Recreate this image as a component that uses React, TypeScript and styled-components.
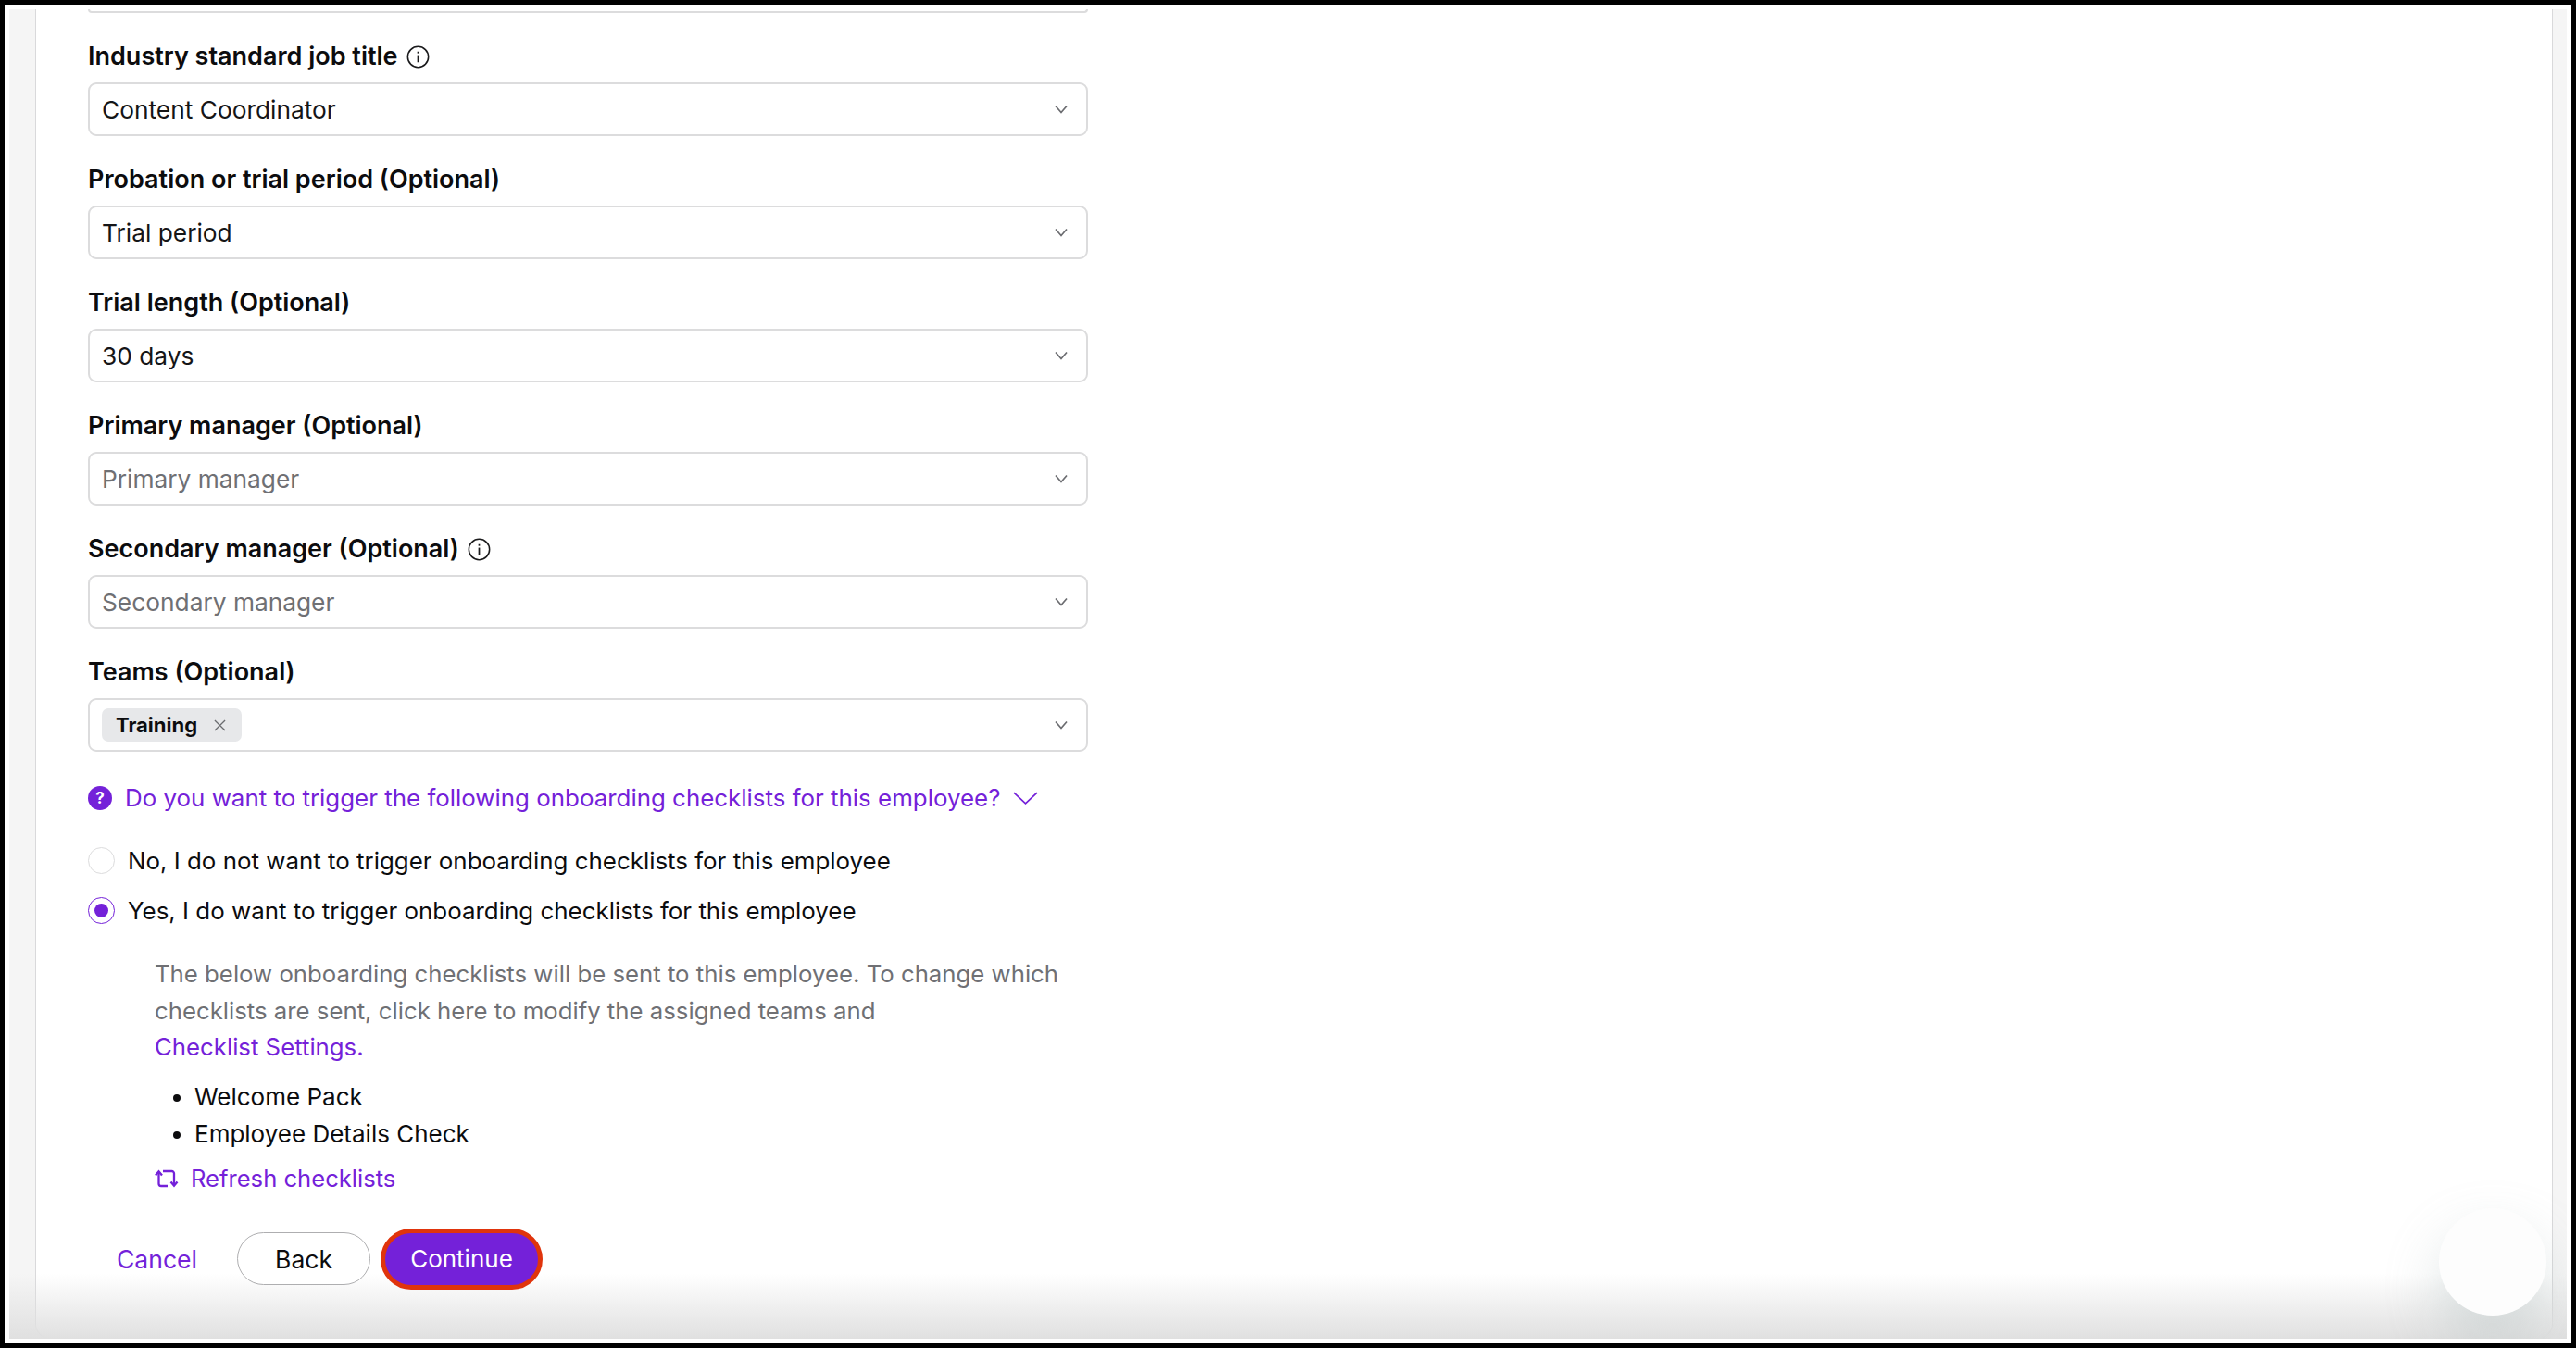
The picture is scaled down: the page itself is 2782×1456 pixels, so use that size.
import React from "react";
import styled, { createGlobalStyle } from "styled-components";

const PURPLE = "#7421d9";

const GlobalStyle = createGlobalStyle`
  html, body {
    margin: 0;
    padding: 0;
    height: 100%;
    background: #000;
  }
  body {
    font-family: Inter, "Liberation Sans", sans-serif;
    color: #0c0c0e;
  }
  * {
    box-sizing: border-box;
  }
`;

const Chevron = () => (
  <svg width="14" height="10" viewBox="0 0 14 10" fill="none">
    <path d="M1 1.5L7 8.5L13 1.5" stroke="#6b6c70" strokeWidth="1.7" />
  </svg>
);

const InfoIcon = () => (
  <InfoSvg width="25" height="25" viewBox="0 0 26 26" fill="none">
    <circle cx="13" cy="13" r="11.6" stroke="#1a1a1c" strokeWidth="1.6" />
    <rect x="12.1" y="11" width="1.8" height="8" fill="#1a1a1c" />
    <rect x="12.1" y="7" width="1.8" height="2" fill="#1a1a1c" />
  </InfoSvg>
);

const RefreshIcon = () => (
  <svg width="26" height="20" viewBox="0 0 26 20" fill="none" stroke={PURPLE} strokeWidth="2.3">
    <path d="M4.5 3V15.5a2.5 2.5 0 0 0 2.5 2.5H14" />
    <path d="M1 6.5L4.5 2.2L8 6.5" />
    <path d="M9 2H18.5a2.5 2.5 0 0 1 2.5 2.5V16" />
    <path d="M17.5 13.5L21 17.8L24.5 13.5" />
  </svg>
);

const Field = ({ label, value, placeholder, info }: { label: string; value?: string; placeholder?: string; info?: boolean }) => (
  <FieldBlock>
    <Label>
      {label}
      {info && <InfoIcon />}
    </Label>
    <Select>
      {value ? <Value>{value}</Value> : <Placeholder>{placeholder}</Placeholder>}
      <Chevron />
    </Select>
  </FieldBlock>
);

export default function App() {
  return (
    <>
      <GlobalStyle />
      <Frame>
        <Screen>
          <Page>
            <Card>
              <CutField />
              <Field label="Industry standard job title" value="Content Coordinator" info />
              <Field label="Probation or trial period (Optional)" value="Trial period" />
              <Field label="Trial length (Optional)" value="30 days" />
              <Field label="Primary manager (Optional)" placeholder="Primary manager" />
              <Field label="Secondary manager (Optional)" placeholder="Secondary manager" info />
              <FieldBlock>
                <Label>Teams (Optional)</Label>
                <Select>
                  <Tag>
                    Training
                    <svg width="13" height="13" viewBox="0 0 14 14" fill="none">
                      <path d="M1 1l12 12M13 1L1 13" stroke="#6b6c70" strokeWidth="1.4" />
                    </svg>
                  </Tag>
                  <Chevron />
                </Select>
              </FieldBlock>

              <Question>
                <QuestionBadge>?</QuestionBadge>
                Do you want to trigger the following onboarding checklists for this employee?
                <svg width="27" height="14" viewBox="0 0 28 14" fill="none">
                  <path d="M1 1l13 12L27 1" stroke={PURPLE} strokeWidth="1.8" />
                </svg>
              </Question>

              <RadioGroup>
                <RadioRow>
                  <Radio />
                  No, I do not want to trigger onboarding checklists for this employee
                </RadioRow>
                <RadioRow>
                  <Radio $checked />
                  Yes, I do want to trigger onboarding checklists for this employee
                </RadioRow>
              </RadioGroup>

              <Details>
                <Note>
                  The below onboarding checklists will be sent to this employee. To change which checklists are sent, click here to modify the assigned teams and
                  <NoteLink>Checklist Settings.</NoteLink>
                </Note>
                <Checklist>
                  <li>Welcome Pack</li>
                  <li>Employee Details Check</li>
                </Checklist>
                <Refresh>
                  <RefreshIcon />
                  Refresh checklists
                </Refresh>
              </Details>

              <Actions>
                <Cancel>Cancel</Cancel>
                <BackButton>Back</BackButton>
                <ContinueButton>Continue</ContinueButton>
              </Actions>
            </Card>
            <BottomFade />
            <Widget />
          </Page>
        </Screen>
      </Frame>
    </>
  );
}

const Frame = styled.div`
  width: 2782px;
  height: 1456px;
  padding: 5px;
  background: #000;
  overflow: hidden;
`;

const Screen = styled.div`
  height: 100%;
  padding: 5px;
  background: #fff;
`;

const Page = styled.div`
  position: relative;
  height: 100%;
  padding-left: 28px;
  padding-right: 15px;
  background: #f5f5f5;
  overflow: hidden;
`;

const Card = styled.main`
  height: 100%;
  padding: 0 0 0 56px;
  background: #fff;
  border: 1px solid #d9d9db;
  border-top: 0;
  border-radius: 0 0 16px 16px;
  overflow: hidden;
`;

const CutField = styled.div`
  width: 1080px;
  height: 4px;
  border: 2px solid #dcdcdd;
  border-top: 0;
  border-radius: 0 0 9px 9px;
`;

const FieldBlock = styled.div`
  width: 1080px;
`;

const Label = styled.label`
  display: flex;
  align-items: center;
  gap: 9px;
  height: 75px;
  padding-top: 19px;
  font-size: 27px;
  font-weight: 600;
  line-height: 32px;
  color: #0c0c0e;
`;

const InfoSvg = styled.svg`
  flex: none;
`;

const Select = styled.div`
  display: flex;
  align-items: center;
  justify-content: space-between;
  height: 58px;
  padding: 0 20px 0 13px;
  background: #fff;
  border: 2px solid #dcdcdd;
  border-radius: 9px;
  font-size: 26.3px;
`;

const Value = styled.span`
  color: #151517;
`;

const Placeholder = styled.span`
  color: #6f7074;
`;

const Tag = styled.span`
  display: flex;
  align-items: center;
  gap: 18px;
  height: 36px;
  padding: 0 17px 0 15px;
  background: #e7e8ea;
  border-radius: 7px;
  font-size: 22px;
  font-weight: 700;
`;

const Question = styled.div`
  display: flex;
  align-items: center;
  gap: 14px;
  width: 1080px;
  margin-top: 32px;
  font-size: 25.9px;
  line-height: 36px;
  color: ${PURPLE};
`;

const QuestionBadge = styled.span`
  display: flex;
  align-items: center;
  justify-content: center;
  flex: none;
  width: 26px;
  height: 26px;
  border-radius: 50%;
  background: ${PURPLE};
  color: #fff;
  font-size: 17px;
  font-weight: 700;
`;

const RadioGroup = styled.div`
  display: flex;
  flex-direction: column;
  gap: 18px;
  margin-top: 31px;
`;

const RadioRow = styled.div`
  display: flex;
  align-items: center;
  gap: 14px;
  height: 36px;
  font-size: 25.9px;
  color: #0c0c0e;
`;

const Radio = styled.span<{ $checked?: boolean }>`
  display: flex;
  align-items: center;
  justify-content: center;
  flex: none;
  width: 29px;
  height: 29px;
  border: 1.5px solid ${(p) => (p.$checked ? PURPLE : "#dcdcdd")};
  border-radius: 50%;

  &::after {
    content: "";
    display: ${(p) => (p.$checked ? "block" : "none")};
    width: 15px;
    height: 15px;
    border-radius: 50%;
    background: ${PURPLE};
  }
`;

const Details = styled.div`
  width: 990px;
  margin: 31px 0 0 72px;
`;

const Note = styled.p`
  margin: 0;
  font-size: 25.75px;
  line-height: 39.5px;
  color: #6f7074;
`;

const NoteLink = styled.a`
  display: block;
  color: ${PURPLE};
`;

const Checklist = styled.ul`
  margin: 14px 0 0;
  padding: 0 0 0 43px;
  font-size: 26px;
  line-height: 40px;
  color: #0c0c0e;
`;

const Refresh = styled.div`
  display: flex;
  align-items: center;
  gap: 13px;
  margin-top: 10px;
  font-size: 25.6px;
  line-height: 36px;
  color: ${PURPLE};
`;

const Actions = styled.div`
  position: relative;
  z-index: 1;
  display: flex;
  align-items: center;
  margin-top: 36px;
  padding-left: 31px;
`;

const Cancel = styled.a`
  width: 130px;
  font-size: 26.5px;
  color: ${PURPLE};
`;

const BackButton = styled.button`
  width: 144px;
  height: 57px;
  padding: 0;
  background: #fff;
  border: 1.5px solid #aeaeb0;
  border-radius: 29px;
  font-family: inherit;
  font-size: 26.5px;
  color: #0c0c0e;
`;

const ContinueButton = styled.button`
  width: 175px;
  height: 66px;
  margin-left: 11px;
  padding: 0;
  background: ${PURPLE};
  border: 5px solid #e0340c;
  border-radius: 33px;
  font-family: inherit;
  font-size: 26px;
  color: #fff;
`;

const BottomFade = styled.div`
  position: absolute;
  left: 0;
  right: 0;
  bottom: 0;
  height: 70px;
  background: linear-gradient(to bottom, rgba(224, 224, 224, 0), rgba(224, 224, 224, 1));
  pointer-events: none;
`;

const Widget = styled.div`
  position: absolute;
  left: 2624px;
  top: 1295px;
  width: 116px;
  height: 116px;
  border-radius: 50%;
  background: #fdfdfd;
  box-shadow: 0 28px 60px rgba(150, 170, 170, 0.3);
`;
